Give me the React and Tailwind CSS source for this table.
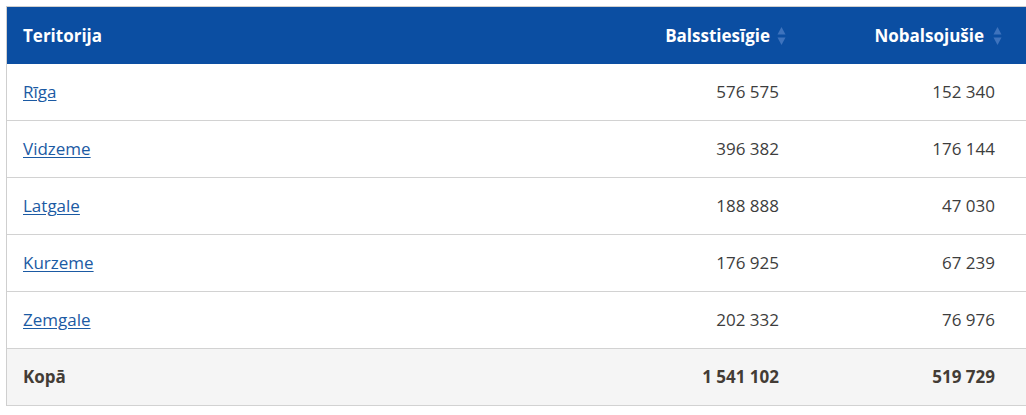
import React from 'react';

const rows = [
  { name: 'Rīga', voters: '576 575', voted: '152 340' },
  { name: 'Vidzeme', voters: '396 382', voted: '176 144' },
  { name: 'Latgale', voters: '188 888', voted: '47 030' },
  { name: 'Kurzeme', voters: '176 925', voted: '67 239' },
  { name: 'Zemgale', voters: '202 332', voted: '76 976' },
];

// small up/down sort arrows shown beside a header label
const SortIcon = () => (
  <svg width="9" height="20" viewBox="0 0 9 20" className="absolute right-[9px] top-1/2 -translate-y-1/2">
    <path d="M4.5 1 L8.5 8.5 L0.5 8.5 Z" fill="#3e73bd" />
    <path d="M4.5 19 L8.5 11.5 L0.5 11.5 Z" fill="#3e73bd" />
  </svg>
);

const App = () => {
  return (
    <div
      className="min-h-screen bg-white pt-[6px] pl-[6px] overflow-hidden"
      style={{ fontFamily: '"Open Sans", "Noto Sans", sans-serif' }}
    >
      <div className="w-[1040px] border-t border-l border-[#cfcfcf]">
        {/* Header */}
        <div className="flex h-[57px] items-center bg-[#0b4ea2] text-white font-bold text-[17px] pr-[35px]">
          <div className="flex-1 pl-4">Teritorija</div>
          <div className="relative w-[216px] text-right pr-[25px]">
            Balsstiesīgie
            <SortIcon />
          </div>
          <div className="relative w-[216px] text-right pr-[27px]">
            Nobalsojušie
            <SortIcon />
          </div>
        </div>

        {/* Body */}
        {rows.map((r) => (
          <div
            key={r.name}
            className="flex h-[57px] items-center border-b border-[#d2d2d2] text-[17px] text-[#3d3d3d] pr-[35px]"
          >
            <div className="flex-1 pl-4">
              <a href="#" className="text-[#1b5aa3] underline underline-offset-2">
                {r.name}
              </a>
            </div>
            <div className="w-[216px] text-right pr-4">{r.voters}</div>
            <div className="w-[216px] text-right pr-4">{r.voted}</div>
          </div>
        ))}

        {/* Totals */}
        <div className="flex h-[57px] items-center border-b border-[#d2d2d2] bg-[#f5f5f5] text-[17px] font-bold text-[#433c35] pr-[35px]">
          <div className="flex-1 pl-4">Kopā</div>
          <div className="w-[216px] text-right pr-4">1 541 102</div>
          <div className="w-[216px] text-right pr-4">519 729</div>
        </div>
      </div>
    </div>
  );
};

export default App;
